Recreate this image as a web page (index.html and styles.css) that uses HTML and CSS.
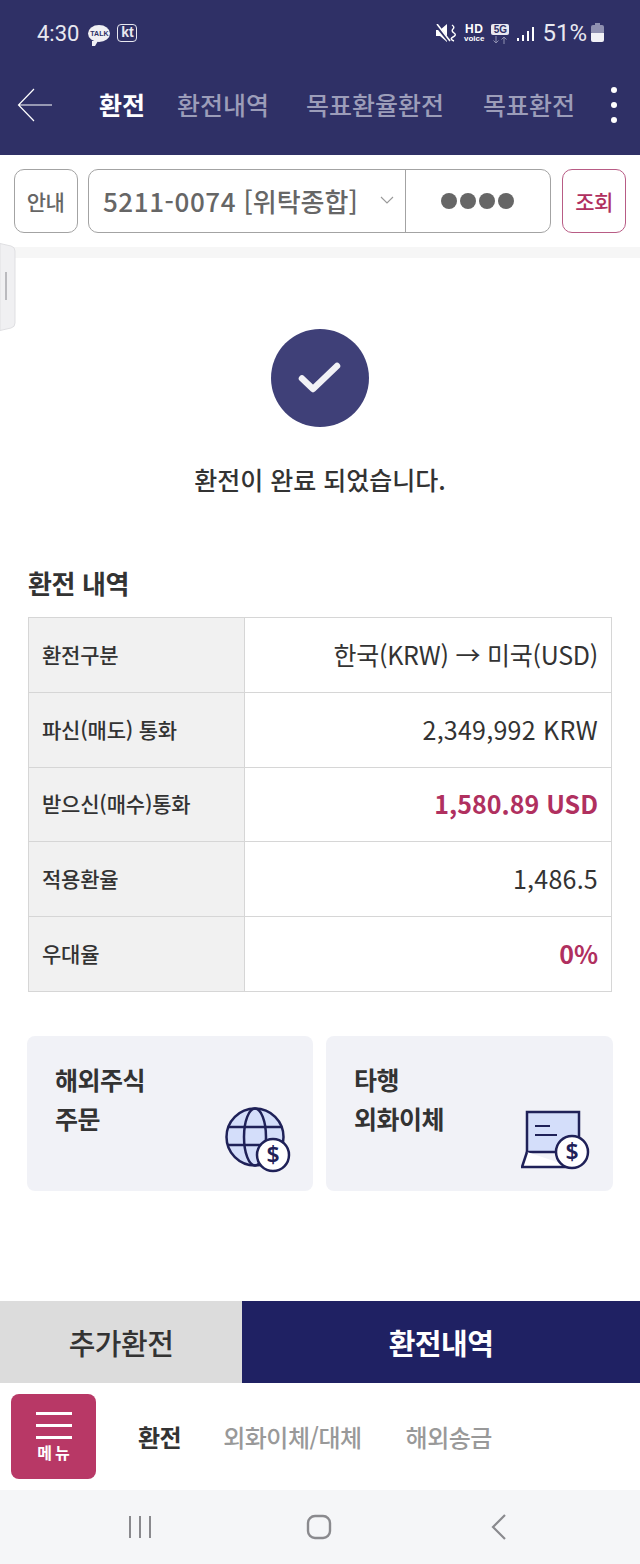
FILE: index.html
```html
<!DOCTYPE html>
<html lang="ko">
<head>
<meta charset="utf-8">
<title>환전</title>
<link rel="stylesheet" href="styles.css">
</head>
<body>
<div class="page">
  <header class="header">
    <div class="status">
      <div class="status-left">
        <span class="time">4:30</span>
        <span class="talk"><span class="talk-text">TALK</span></span>
        <span class="kt">kt</span>
      </div>
      <div class="status-right">
        <svg class="ico-mute" viewBox="0 0 20 18" width="20" height="18"><path d="M0 6h4l7-6v18l-7-6H0z" fill="#fff"/><path d="M0 1l13 16" stroke="#2f3066" stroke-width="3"/><path d="M1 0l13 17" stroke="#fff" stroke-width="1.600"/><path d="M16 1q3 2 1 4t1 4-1 4 1 4" stroke="#fff" stroke-width="1.400" fill="none"/></svg>
        <span class="hd"><span class="hd-top">HD</span><span class="hd-sub">voice</span></span>
        <span class="fiveg"><span class="fiveg-box">5G</span><svg viewBox="0 0 16 8" width="16" height="8"><path d="M4 0v7M1.500 4.500L4 7l2.500-2.500" stroke="#8f90b0" stroke-width="1" fill="none"/><path d="M12 8V1M9.500 3.500L12 1l2.500 2.500" stroke="#8f90b0" stroke-width="1" fill="none"/></svg></span>
        <svg class="ico-signal" viewBox="0 0 17 14" width="17" height="14"><rect x="0" y="11" width="2" height="3" fill="#fff"/><rect x="5" y="8" width="2" height="6" fill="#fff"/><rect x="10" y="4" width="2" height="10" fill="#fff"/><rect x="15" y="0" width="2" height="14" fill="#fff"/></svg>
        <span class="pct">51%</span>
        <svg class="ico-batt" viewBox="0 0 13 20" width="13" height="20"><rect x="4" y="0" width="5" height="3" fill="#8f90b0"/><rect x="0" y="2" width="13" height="9" rx="2" fill="#8f90b0"/><path d="M0 10h13v7a2 2 0 0 1-2 2H2a2 2 0 0 1-2-2z" fill="#f1f1f6"/></svg>
      </div>
    </div>
    <nav class="nav">
      <svg class="ico-back" viewBox="0 0 36 34" width="36" height="34"><path d="M35 17H2M17 1L1.500 17 17 33" stroke="#fff" stroke-width="1.200" fill="none"/></svg>
      <span class="nav-item nav-on">환전</span>
      <span class="nav-item n2">환전내역</span>
      <span class="nav-item n3">목표환율환전</span>
      <span class="nav-item n4">목표환전</span>
      <span class="dots"><i></i><i></i><i></i></span>
    </nav>
  </header>

  <section class="toolbar">
    <button class="btn">안내</button>
    <div class="account">
      <div class="acc-select">
        <span><span class="acc-num">5211-0074</span> [위탁종합]</span>
        <svg viewBox="0 0 14 8" width="14" height="8"><path d="M1 1l6 6 6-6" stroke="#999" stroke-width="1.100" fill="none"/></svg>
      </div>
      <div class="acc-pass"><i></i><i></i><i></i><i></i></div>
    </div>
    <button class="btn btn-pink">조회</button>
  </section>
  <div class="band"></div>
  <div class="handle">
    <svg viewBox="0 0 16 88" width="16" height="88"><path d="M0 0.500L11 3Q15 4 15 8V80Q15 84 11 85L0 87.500z" fill="#f0f0f2" stroke="#dfdfe2" stroke-width="1"/><path d="M6 29v28" stroke="#a8a8ac" stroke-width="1.500"/></svg>
  </div>

  <main class="main">
    <div class="done">
      <div class="check">
        <svg viewBox="0 0 44 34" width="44" height="34"><path d="M4 17.500L15 28 39 5" stroke="#f2f2f6" stroke-width="6.500" stroke-linecap="round" stroke-linejoin="round" fill="none"/></svg>
      </div>
      <p class="done-text">환전이 완료 되었습니다.</p>
    </div>

    <h2 class="title">환전 내역</h2>
    <div class="table">
      <div class="row"><div class="th">환전구분</div><div class="td td-tight">한국(KRW) → 미국(USD)</div></div>
      <div class="row"><div class="th">파신(매도) 통화</div><div class="td">2,349,992 KRW</div></div>
      <div class="row"><div class="th">받으신(매수)통화</div><div class="td td-pink">1,580.89 USD</div></div>
      <div class="row"><div class="th">적용환율</div><div class="td">1,486.5</div></div>
      <div class="row"><div class="th">우대율</div><div class="td td-pink">0%</div></div>
    </div>

    <div class="cards">
      <div class="card">
        <div class="card-text">해외주식<br>주문</div>
        <svg class="card-ico" viewBox="0 0 66 66" width="66" height="66">
          <circle cx="30" cy="30" r="28.500" fill="#d4defa" stroke="#1f2158" stroke-width="2.500"/>
          <ellipse cx="30" cy="30" rx="11" ry="28.500" fill="none" stroke="#1f2158" stroke-width="2.500"/>
          <path d="M3 20h54M3 38h54" stroke="#1f2158" stroke-width="2.500"/>
          <circle cx="48" cy="48" r="16" fill="#fff" stroke="#1f2158" stroke-width="2.500"/>
          <text class="dollar" x="48" y="56" text-anchor="middle">$</text>
        </svg>
      </div>
      <div class="card">
        <div class="card-text">타행<br>외화이체</div>
        <svg class="card-ico card-ico2" viewBox="0 0 70 60" width="70" height="60">
          <rect x="6" y="2" width="52" height="40" fill="#d4defa" stroke="#1f2158" stroke-width="2.500"/>
          <path d="M6 42L1 57h50" fill="#fff" stroke="#1f2158" stroke-width="2.500"/>
          <path d="M14 16h15M14 25h22" stroke="#1f2158" stroke-width="2.200"/>
          <circle cx="51" cy="42" r="16" fill="#fff" stroke="#1f2158" stroke-width="2.500"/>
          <text class="dollar" x="51" y="50" text-anchor="middle">$</text>
        </svg>
      </div>
    </div>
  </main>

  <div class="actions">
    <button class="act act-gray">추가환전</button>
    <button class="act act-navy">환전내역</button>
  </div>

  <div class="tabs">
    <div class="menu">
      <span class="bars"><i></i><i></i><i></i></span>
      <span class="menu-label">메뉴</span>
    </div>
    <span class="tab tab-on">환전</span>
    <span class="tab">외화이체/대체</span>
    <span class="tab">해외송금</span>
  </div>

  <footer class="sysnav">
    <svg viewBox="0 0 24 24" width="24" height="24"><path d="M2 1v22M12 1v22M22 1v22" stroke="#8a8a8e" stroke-width="2" fill="none"/></svg>
    <svg viewBox="0 0 26 26" width="26" height="26"><rect x="2" y="2" width="22" height="22" rx="7" stroke="#8a8a8e" stroke-width="2.400" fill="none"/></svg>
    <svg viewBox="0 0 16 26" width="16" height="26"><path d="M14 1L2 13l12 12" stroke="#8a8a8e" stroke-width="2.200" fill="none"/></svg>
  </footer>
</div>
</body>
</html>
```
FILE: styles.css
```css
* { box-sizing: border-box; }
html, body { margin: 0; padding: 0; }
body { background: #fff; font-family: "Noto Sans CJK KR", "Noto Sans", sans-serif; color: #333; }
.page { position: relative; width: 640px; height: 1564px; display: flex; flex-direction: column; overflow: hidden; }
i { display: block; }

.header { height: 155px; background: #2f3066; flex: none; }
.status { height: 66px; display: flex; justify-content: space-between; align-items: center; padding: 0 36px 0 37px; }
.status-left, .status-right { display: flex; align-items: center; }
.time { color: #e8e8f0; font-family: "Roboto", sans-serif; font-size: 22px; }
.talk { width: 22px; height: 17px; border-radius: 50%; background: #f0f0f4; margin-left: 9px; display: flex; align-items: center; justify-content: center; position: relative; }
.talk::after { content: ""; position: absolute; left: 4px; bottom: -4px; border-left: 3px solid #f0f0f4; border-right: 3px solid transparent; border-top: 5px solid #f0f0f4; }
.talk-text { font: 700 7px "Liberation Sans", sans-serif; color: #2f3066; }
.kt { margin-left: 7px; width: 20px; height: 18px; border: 1px solid #e8e8f0; border-radius: 4px; color: #e8e8f0; font: 700 14px/15px "Liberation Sans", sans-serif; text-align: center; }
.ico-mute { margin-right: 8px; }
.hd { display: flex; flex-direction: column; align-items: center; color: #fff; margin-right: 7px; }
.hd-top { font: 700 12px/11px "Liberation Sans", sans-serif; letter-spacing: .5px; }
.hd-sub { font: 700 8px/8px "Liberation Sans", sans-serif; }
.fiveg { display: flex; flex-direction: column; align-items: center; margin-right: 8px; margin-top: 2px; }
.fiveg-box { background: #e8e8f0; color: #2f3066; border-radius: 2px; font: 700 10px/11px "Liberation Sans", sans-serif; width: 18px; text-align: center; margin-bottom: 1px; }
.ico-signal { margin-right: 8px; margin-top: 2px; }
.pct { color: #e8e8f0; font-family: "Roboto", sans-serif; font-size: 24px; margin-right: 4px; }

.nav { position: relative; height: 89px; display: flex; align-items: center; padding: 0 0 12px 17px; }
.ico-back { flex: none; margin-right: 46px; }
.nav-item { color: #9c9db9; font-size: 25px; font-weight: 500; letter-spacing: 0; white-space: nowrap; line-height: 1; }
.nav-on { color: #fff; font-weight: 700; }
.n2 { margin-left: 32px; }
.n3 { margin-left: 37px; }
.n4 { margin-left: 39px; }
.dots { margin-left: 36px; display: flex; flex-direction: column; gap: 9px; }
.dots i { width: 6px; height: 6px; border-radius: 50%; background: #fff; }

.toolbar { flex: none; height: 92px; padding: 14px 14px 14px; display: flex; gap: 10px; }
.btn { width: 64px; height: 64px; padding: 0 1px 0 0; background: #fff; border: 1px solid #a3a3a3; border-radius: 10px; color: #666; font: 500 21px "Noto Sans CJK KR", sans-serif; letter-spacing: -.5px; }
.btn-pink { border-color: #b85c85; color: #b0305f; margin-left: 1px; padding: 0; }
.account { width: 464px; height: 64px; border: 1px solid #a3a3a3; border-radius: 10px; display: flex; }
.acc-select { width: 317px; border-right: 1px solid #a3a3a3; display: flex; align-items: center; justify-content: space-between; padding: 0 11px 2px 14px; color: #666; font-size: 26px; font-weight: 500; white-space: nowrap; }
.acc-num { letter-spacing: .6px; }
.acc-pass { flex: 1; display: flex; align-items: center; justify-content: center; gap: 3px; }
.acc-pass i { width: 16px; height: 16px; border-radius: 50%; background: #666; }
.band { flex: none; height: 11px; background: #f6f6f6; }
.handle { position: absolute; left: 0; top: 243px; width: 16px; height: 88px; }
.handle svg { display: block; }

.main { flex: 1; padding: 0 27px 0 27px; }
.done { display: flex; flex-direction: column; align-items: center; padding-top: 71px; }
.check { width: 98px; height: 98px; border-radius: 50%; background: #3f4078; display: flex; align-items: center; justify-content: center; }
.done-text { margin: 32px 0 0; font-size: 25px; line-height: 40px; font-weight: 500; color: #333; letter-spacing: 0; }
.title { margin: 64px 0 0 1px; font-size: 26px; line-height: 40px; font-weight: 700; color: #333; letter-spacing: -.4px; }
.table { margin: 14px 1px 0 1px; border: 1px solid #d6d6d6; border-bottom: 0; }
.row { display: flex; height: 74.800px; border-bottom: 1px solid #d6d6d6; }
.th { width: 216px; flex: none; background: #f1f1f1; border-right: 1px solid #d6d6d6; padding: 0 0 2px 13px; display: flex; align-items: center; font-size: 21px; font-weight: 500; color: #333; letter-spacing: -.2px; }
.td { flex: 1; display: flex; align-items: center; justify-content: flex-end; padding: 0 13px 2px 0; font-size: 25px; color: #333; letter-spacing: .25px; }
.td-tight { letter-spacing: -.25px; }
.td-pink { color: #b0305f; font-weight: 700; letter-spacing: 0; }

.cards { display: grid; grid-template-columns: 286px 287px; gap: 13px; margin-top: 44px; }
.card { position: relative; height: 155px; background: #f1f2f7; border-radius: 8px; padding: 24px 28px; }
.card-text { font-size: 25px; line-height: 39px; font-weight: 700; color: #333; letter-spacing: -.5px; }
.card-ico { position: absolute; right: 22px; bottom: 18px; }
.card-ico2 { right: 22px; bottom: 21px; }
.dollar { font: 600 23px "Noto Sans", sans-serif; fill: #1f2158; }

.actions { flex: none; height: 82px; display: flex; }
.act { border: 0; padding: 0; font: 700 29px "Noto Sans CJK KR", sans-serif; letter-spacing: -.5px; }
.act-gray { width: 242px; background: #dcdcdc; color: #333; font-weight: 500; }
.act-navy { flex: 1; background: #1f2163; color: #fff; }

.tabs { flex: none; height: 107px; display: flex; align-items: center; padding-left: 11px; }
.menu { width: 85px; height: 85px; border-radius: 8px; background: #b83866; display: flex; flex-direction: column; align-items: center; padding-top: 18px; }
.bars { display: flex; flex-direction: column; gap: 9px; }
.bars i { width: 36px; height: 3px; background: #fff; }
.menu-label { color: #fff; font-size: 16px; line-height: 18px; font-weight: 700; letter-spacing: 3px; margin: 4px 0 0 3px; }
.tab { margin-left: 44px; color: #999; font-size: 24px; font-weight: 500; letter-spacing: -.5px; white-space: nowrap; }
.tab-on { margin-left: 42px; color: #333; font-weight: 700; }
.tab-on + .tab { margin-left: 42px; }

.sysnav { flex: none; height: 74px; background: #f5f6f8; display: flex; align-items: center; padding: 0 0 0 128px; }
.sysnav svg:nth-child(2) { margin-left: 154px; }
.sysnav svg:nth-child(3) { margin-left: 159px; }
```
